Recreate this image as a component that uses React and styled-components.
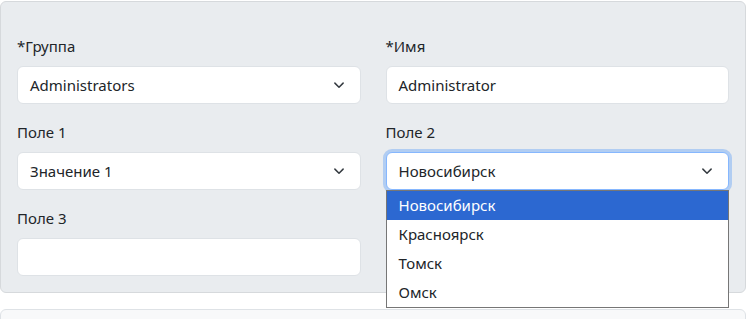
import React from 'react'
import styled, { createGlobalStyle } from 'styled-components';

const GlobalStyle = createGlobalStyle`
  body {
    margin: 0;
    background: #fff;
    font-family: "Noto Sans", "Open Sans", sans-serif;
    color: #212529;
  }
`;

const Page = styled.div`
  padding-top: 1px;
  width: 746px;
  height: 318px;
  overflow: hidden;
`;

const Panel = styled.div`
  background: #e9ecef;
  border: 1px solid #d6d9dc;
  border-radius: 6px;
  padding: 32px 16px 16px 16px;
  display: grid;
  grid-template-columns: 1fr 1fr;
  column-gap: 25px;
  row-gap: 16px;
`;

const Field = styled.div`
  position: relative;
  display: flex;
  flex-direction: column;
`;

const Label = styled.label`
  font-size: 15px;
  line-height: 24px;
  margin-bottom: 8px;
  color: #212529;
`;

const Box = styled.div`
  box-sizing: border-box;
  height: 38px;
  background: #fff;
  border: 1px solid ${props => props.$focused ? '#86b7fe' : '#dee2e6'};
  border-radius: 6px;
  box-shadow: ${props => props.$focused ? '0 0 0 3px rgba(13, 110, 253, 0.25)' : 'none'};
  padding: 0 12px;
  display: flex;
  align-items: center;
  justify-content: space-between;
  font-size: 15px;
  color: #212529;
`;

const Chevron = styled.svg`
  width: 16px;
  height: 12px;
  margin-right: 1px;
`;

const List = styled.ul`
  position: absolute;
  left: 0;
  right: 0;
  top: 100%;
  margin: 0;
  padding: 0;
  list-style: none;
  background: #fff;
  border: 1px solid #767676;
  z-index: 2;
`;

const Option = styled.li`
  height: 29px;
  line-height: 29px;
  padding: 0 12px;
  font-size: 15px;
  background: ${props => props.$active ? '#2c68d1' : '#fff'};
  color: ${props => props.$active ? '#fff' : '#212529'};
`;

const Footer = styled.div`
  margin-top: 16px;
  height: 40px;
  background: #f8f9fa;
  border: 1px solid #dee2e6;
  border-radius: 6px;
`;

const Arrow = () => (
  <Chevron viewBox="0 0 16 16">
    <path d="m2.5 5.5 5.5 5.5 5.5-5.5" fill="none" stroke="#343a40" strokeWidth="2" strokeLinecap="round" strokeLinejoin="round" />
  </Chevron>
);

const cities = ['Новосибирск', 'Красноярск', 'Томск', 'Омск'];

export default function App() {
  return (
    <Page>
      <GlobalStyle />
      <Panel>
        <Field>
          <Label>*Группа</Label>
          <Box>Administrators<Arrow /></Box>
        </Field>
        <Field>
          <Label>*Имя</Label>
          <Box>Administrator</Box>
        </Field>
        <Field>
          <Label>Поле 1</Label>
          <Box>Значение 1<Arrow /></Box>
        </Field>
        <Field>
          <Label>Поле 2</Label>
          <div style={{ position: 'relative' }}>
            <Box $focused>Новосибирск<Arrow /></Box>
            <List>
              {cities.map((c, i) => (
                <Option key={c} $active={i === 0}>{c}</Option>
              ))}
            </List>
          </div>
        </Field>
        <Field>
          <Label>Поле 3</Label>
          <Box />
        </Field>
      </Panel>
      <Footer />
    </Page>
  );
}
